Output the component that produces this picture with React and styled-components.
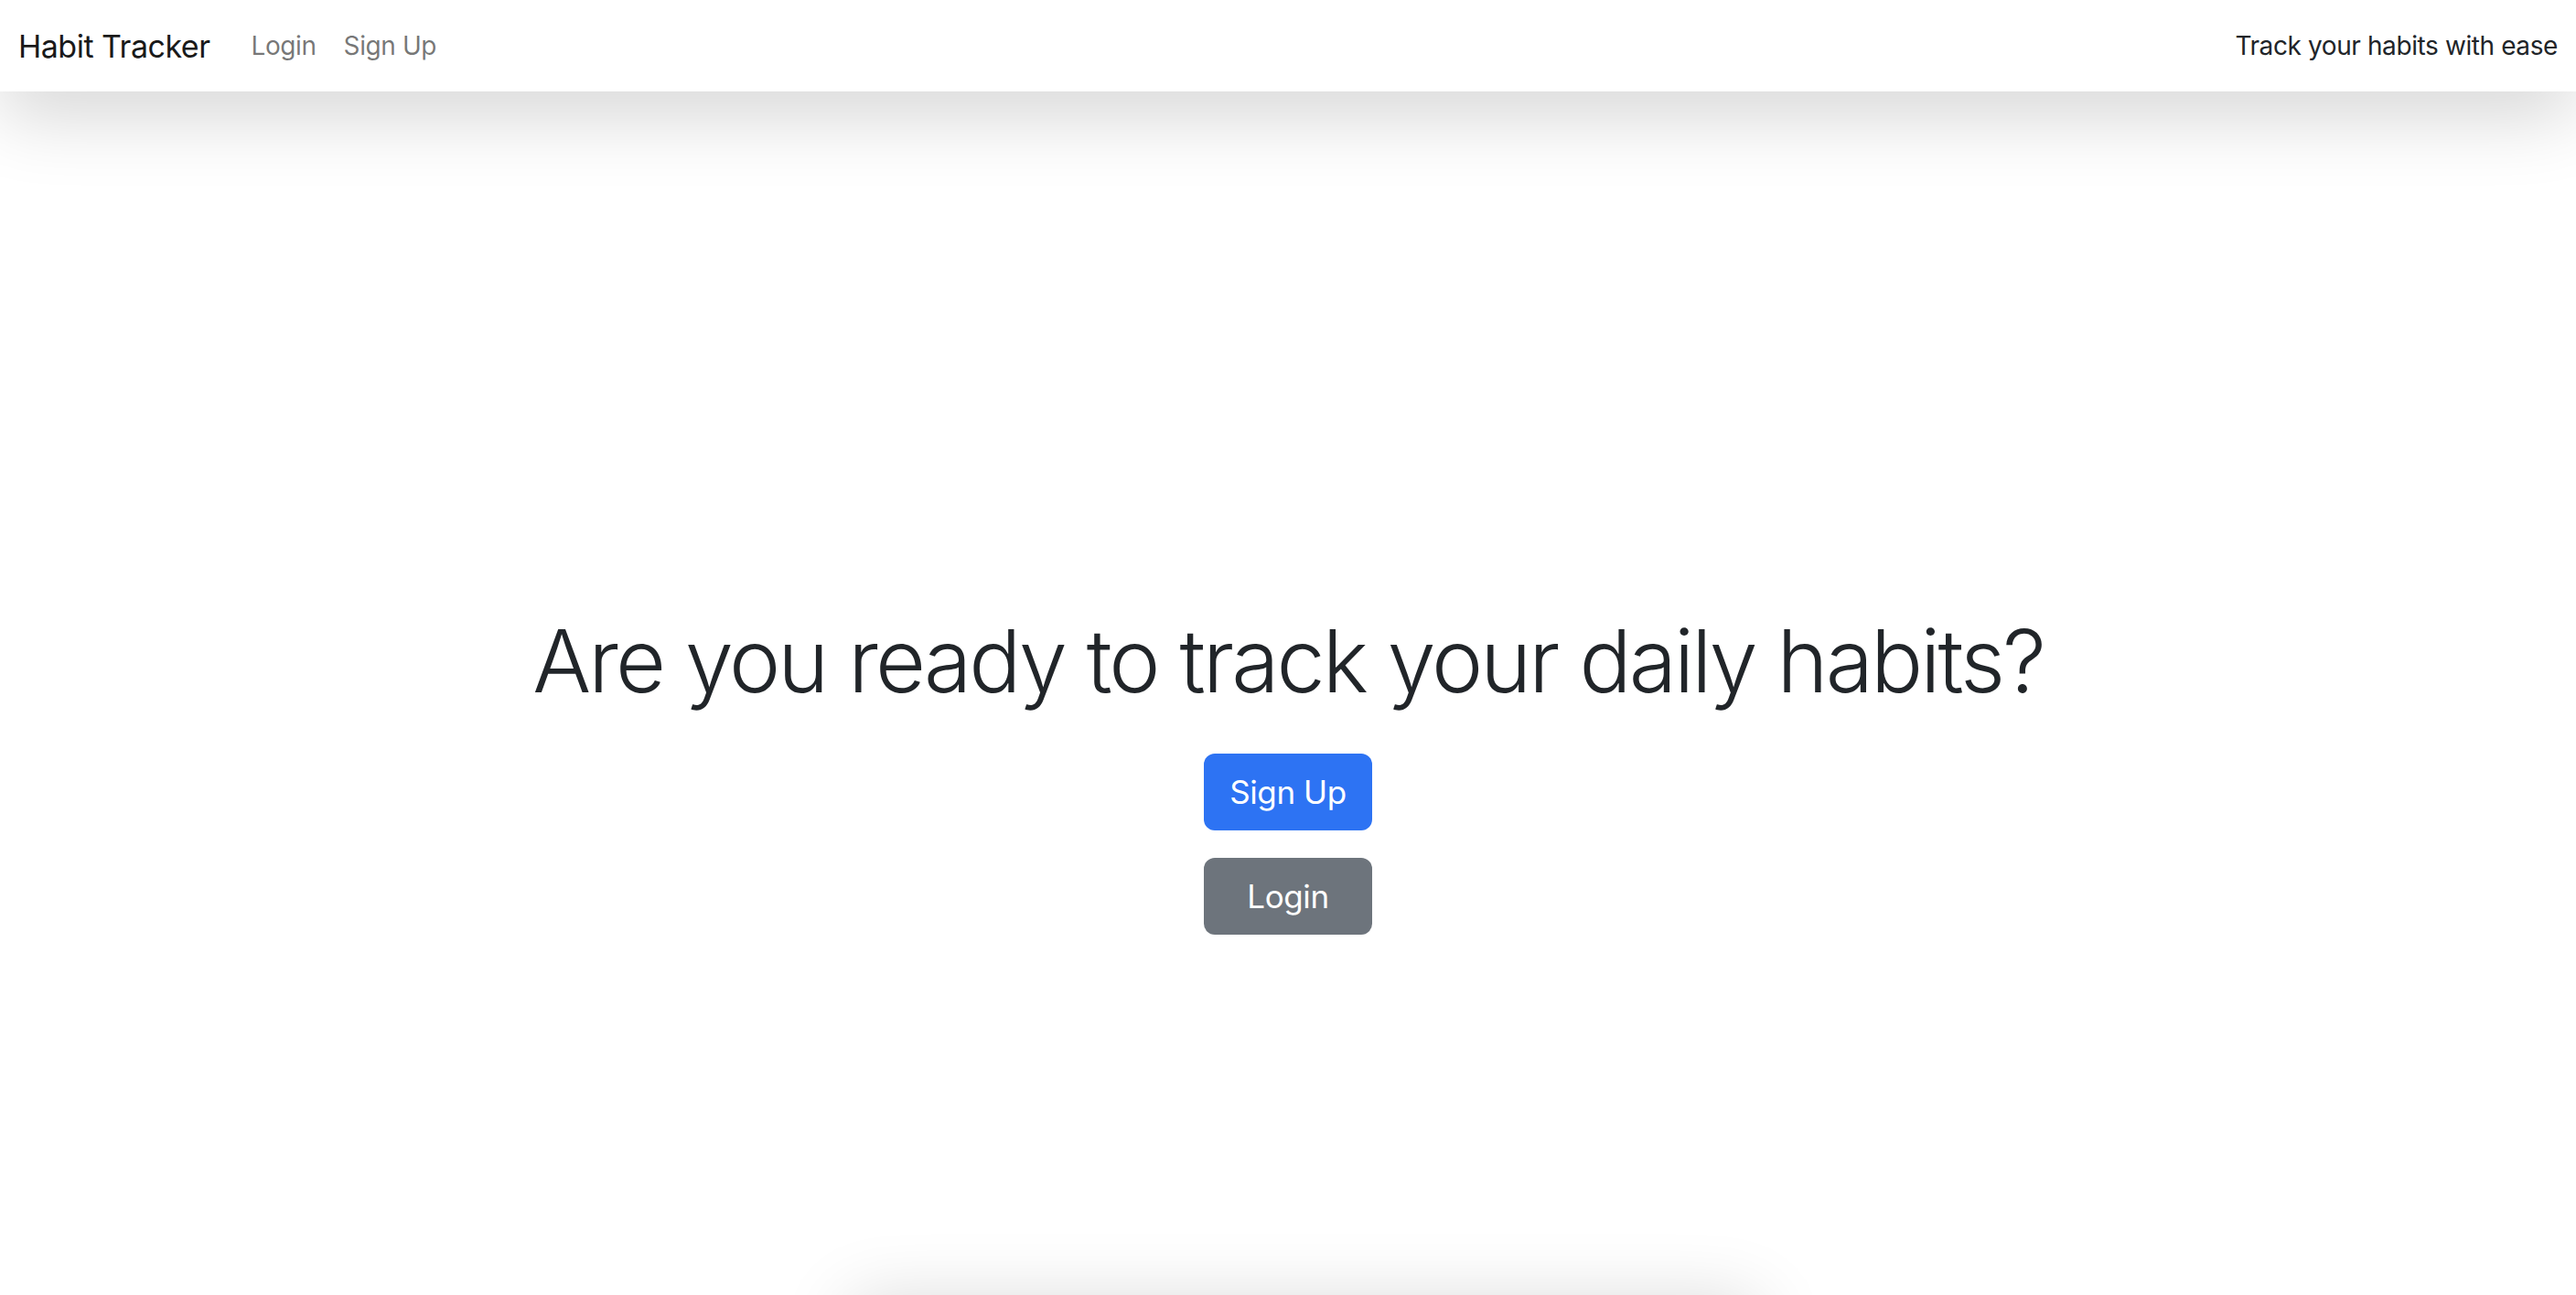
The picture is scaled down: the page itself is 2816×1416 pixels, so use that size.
import React from "react";
import styled, { createGlobalStyle } from "styled-components";

const GlobalStyle = createGlobalStyle`
  html, body {
    margin: 0;
    padding: 0;
    background: #ffffff;
    overflow: hidden;
  }
  body {
    font-family: Inter, "Noto Sans", "Liberation Sans", sans-serif;
    color: #212529;
  }
`;

const Page = styled.div`
  height: 1416px;
  display: flex;
  flex-direction: column;
  overflow: hidden;
`;

const Navbar = styled.nav`
  position: relative;
  z-index: 2;
  height: 100px;
  flex-shrink: 0;
  display: flex;
  align-items: center;
  justify-content: space-between;
  padding: 0 20px;
  background: #ffffff;
  box-shadow: 0 28px 80px rgba(0, 0, 0, 0.16);
`;

const NavLeft = styled.div`
  display: flex;
  align-items: center;
`;

const Brand = styled.a`
  font-size: 34px;
  letter-spacing: -0.5px;
  color: #1a1a1a;
  text-decoration: none;
  margin-right: 30px;
`;

const NavLink = styled.a`
  font-size: 28px;
  letter-spacing: -0.4px;
  color: rgba(0, 0, 0, 0.55);
  text-decoration: none;
  padding: 0 15px;
`;

const Tagline = styled.span`
  font-size: 28px;
  letter-spacing: -0.4px;
  color: #212529;
`;

const Main = styled.main`
  flex: 1;
  display: flex;
  flex-direction: column;
  align-items: center;
  padding-top: 566px;
`;

const Heading = styled.h1`
  margin: 0 0 44px;
  font-size: 95px;
  font-weight: 300;
  letter-spacing: -2.9px;
  line-height: 1.2;
  color: #212529;
`;

const Actions = styled.div`
  display: flex;
  flex-direction: column;
  align-items: center;
  gap: 30px;
`;

const Button = styled.button`
  width: 184px;
  height: 84px;
  border: none;
  border-radius: 12px;
  font-family: inherit;
  font-size: 35px;
  letter-spacing: -0.4px;
  color: #ffffff;
  background: ${(p) => (p.variant === "secondary" ? "#6d747c" : "#2d73f3")};
  cursor: pointer;
`;

const FooterCard = styled.div`
  position: absolute;
  left: 930px;
  top: 1430px;
  width: 990px;
  height: 200px;
  background: #ffffff;
  box-shadow: 0 -6px 80px rgba(0, 0, 0, 0.16);
`;

export default function App() {
  return (
    <Page>
      <GlobalStyle />
      <Navbar>
        <NavLeft>
          <Brand href="#">Habit Tracker</Brand>
          <NavLink href="#">Login</NavLink>
          <NavLink href="#">Sign Up</NavLink>
        </NavLeft>
        <Tagline>Track your habits with ease</Tagline>
      </Navbar>
      <Main>
        <Heading>Are you ready to track your daily habits?</Heading>
        <Actions>
          <Button>Sign Up</Button>
          <Button variant="secondary">Login</Button>
        </Actions>
      </Main>
      <FooterCard />
    </Page>
  );
}
